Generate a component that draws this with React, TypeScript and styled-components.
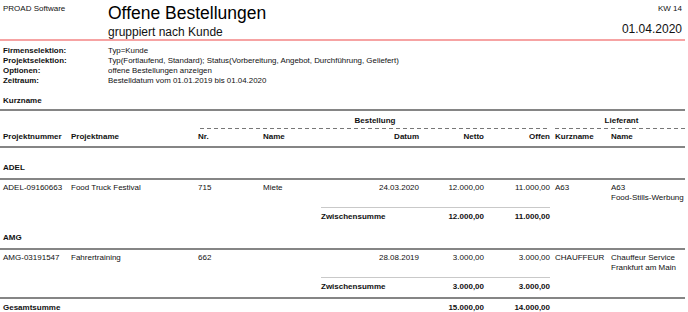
import styled, { createGlobalStyle } from "styled-components";

const GlobalStyle = createGlobalStyle`
  html, body {
    margin: 0;
    padding: 0;
    background: #ffffff;
  }
  body {
    font-family: "Liberation Sans", Arial, sans-serif;
    color: #111111;
  }
`;

const COLS = "68px 127px 65px 58px 39px 59px 65px 66px 61px 1fr";

type Order = {
  projektnummer: string;
  projektname: string;
  nr: string;
  name: string;
  datum: string;
  netto: string;
  offen: string;
  kurzname: string;
  lieferant: string[];
};

type Group = {
  kunde: string;
  orders: Order[];
  netto: string;
  offen: string;
};

const groups: Group[] = [
  {
    kunde: "ADEL",
    orders: [
      {
        projektnummer: "ADEL-09160663",
        projektname: "Food Truck Festival",
        nr: "715",
        name: "Miete",
        datum: "24.03.2020",
        netto: "12.000,00",
        offen: "11.000,00",
        kurzname: "A63",
        lieferant: ["A63", "Food-Stills-Werbung"],
      },
    ],
    netto: "12.000,00",
    offen: "11.000,00",
  },
  {
    kunde: "AMG",
    orders: [
      {
        projektnummer: "AMG-03191547",
        projektname: "Fahrertraining",
        nr: "662",
        name: "",
        datum: "28.08.2019",
        netto: "3.000,00",
        offen: "3.000,00",
        kurzname: "CHAUFFEUR",
        lieferant: ["Chauffeur Service", "Frankfurt am Main"],
      },
    ],
    netto: "3.000,00",
    offen: "3.000,00",
  },
];

const meta = [
  ["Firmenselektion:", "Typ=Kunde"],
  ["Projektselektion:", "Typ(Fortlaufend, Standard); Status(Vorbereitung, Angebot, Durchführung, Geliefert)"],
  ["Optionen:", "offene Bestellungen anzeigen"],
  ["Zeitraum:", "Bestelldatum vom 01.01.2019 bis 01.04.2020"],
];

export default function App() {
  return (
    <Page>
      <GlobalStyle />
      <Header>
        <Brand>PROAD Software</Brand>
        <TitleBox>
          <Title>Offene Bestellungen</Title>
          <Subtitle>gruppiert nach Kunde</Subtitle>
        </TitleBox>
        <DateBox>
          <Week>KW 14</Week>
          <DateText>01.04.2020</DateText>
        </DateBox>
      </Header>

      <Meta>
        {meta.map(([label, value]) => (
          <MetaRow key={label}>
            <b>{label}</b>
            <span>{value}</span>
          </MetaRow>
        ))}
      </Meta>

      <GroupKey>Kurzname</GroupKey>

      <ColumnGroups>
        <GroupTitle $from={3} $to={9}>Bestellung</GroupTitle>
        <GroupTitle $from={9} $to={11} $inset={5}>Lieferant</GroupTitle>
      </ColumnGroups>

      <HeadRow>
        <Cell>Projektnummer</Cell>
        <Cell>Projektname</Cell>
        <Cell>Nr.</Cell>
        <Cell $span={2}>Name</Cell>
        <Cell $right>Datum</Cell>
        <Cell $right>Netto</Cell>
        <Cell $right>Offen</Cell>
        <Cell $pad>Kurzname</Cell>
        <Cell>Name</Cell>
      </HeadRow>

      <Groups>
        {groups.map((g) => (
          <section key={g.kunde}>
            <Customer>{g.kunde}</Customer>
            {g.orders.map((o) => (
              <DataRow key={o.projektnummer}>
                <Cell>{o.projektnummer}</Cell>
                <Cell>{o.projektname}</Cell>
                <Cell>{o.nr}</Cell>
                <Cell $span={2}>{o.name}</Cell>
                <Cell $right>{o.datum}</Cell>
                <Cell $right>{o.netto}</Cell>
                <Cell $right>{o.offen}</Cell>
                <Cell $pad>{o.kurzname}</Cell>
                <Cell>
                  {o.lieferant.map((l) => (
                    <div key={l}>{l}</div>
                  ))}
                </Cell>
              </DataRow>
            ))}
            <SubtotalRow>
              <SubRule />
              <Label>Zwischensumme</Label>
              <Amount>{g.netto}</Amount>
              <Amount>{g.offen}</Amount>
            </SubtotalRow>
          </section>
        ))}
      </Groups>

      <TotalRow>
        <TotalLabel>Gesamtsumme</TotalLabel>
        <Amount>15.000,00</Amount>
        <Amount>14.000,00</Amount>
      </TotalRow>
    </Page>
  );
}

const Page = styled.div`
  width: 688px;
  height: 312px;
  overflow: hidden;
  font-size: 8px;
  line-height: 10px;
`;

const Header = styled.header`
  display: grid;
  grid-template-columns: 105px 1fr auto;
  height: 39px;
  padding: 0 6px 0 3px;
  margin-right: 3px;
  border-bottom: 2px solid #f6a3a3;
`;

const Brand = styled.div`
  padding-top: 4px;
`;

const TitleBox = styled.div`
  display: flex;
  flex-direction: column;
`;

const Title = styled.h1`
  margin: 3px 0 0;
  font-size: 17.5px;
  line-height: 20px;
  font-weight: 400;
  color: #000;
`;

const Subtitle = styled.div`
  margin-top: 2px;
  font-size: 12px;
  line-height: 14px;
`;

const DateBox = styled.div`
  display: flex;
  flex-direction: column;
  align-items: flex-end;
  margin-right: -3px;
`;

const Week = styled.div`
  padding-top: 4px;
`;

const DateText = styled.div`
  margin-top: 8px;
  font-size: 12px;
  line-height: 14px;
`;

const Meta = styled.div`
  padding: 5px 3px 0;
  font-size: 7.9px;
`;

const MetaRow = styled.div`
  display: grid;
  grid-template-columns: 105px 1fr;

  b {
    font-weight: 700;
  }
`;

const GroupKey = styled.div`
  margin: 10px 3px 0 0;
  padding: 0 3px 3px;
  font-weight: 700;
  border-bottom: 2px solid #858585;
`;

const ColumnGroups = styled.div`
  display: grid;
  grid-template-columns: ${COLS};
  margin-top: 5px;
  padding-left: 3px;
`;

const GroupTitle = styled.div<{ $from: number; $to: number; $inset?: number }>`
  grid-column: ${(p) => p.$from} / ${(p) => p.$to};
  margin-left: ${(p) => p.$inset ?? 2}px;
  padding-bottom: 3px;
  text-align: center;
  font-weight: 700;
  background: repeating-linear-gradient(to right, #777 0 4px, transparent 4px 7px)
    bottom / 100% 1px no-repeat;
`;

const Row = styled.div`
  display: grid;
  grid-template-columns: ${COLS};
  padding-left: 3px;
`;

const HeadRow = styled(Row)`
  margin: 3px 3px 0 0;
  padding-bottom: 4px;
  font-weight: 700;
  border-bottom: 2px solid #858585;
`;

const Groups = styled.div`
  display: flow-root;
  padding-top: 4px;
`;

const Cell = styled.div<{ $right?: boolean; $pad?: boolean; $span?: number }>`
  grid-column: span ${(p) => p.$span ?? 1};
  text-align: ${(p) => (p.$right ? "right" : "left")};
  padding-left: ${(p) => (p.$pad ? 5 : 0)}px;
  white-space: nowrap;
`;

const Customer = styled.div`
  margin: 11px 3px 0 0;
  padding: 0 3px 5px;
  font-weight: 700;
  border-bottom: 2px solid #858585;
`;

const DataRow = styled(Row)`
  margin-top: 3px;
`;

const SubtotalRow = styled(Row)`
  margin-top: 4px;
  row-gap: 4px;
  font-weight: 700;
`;

const SubRule = styled.div`
  grid-column: 5 / 9;
  height: 1px;
  background: #c9c9c9;
`;

const Label = styled.div`
  grid-column: 5 / 7;
`;

const Amount = styled.div`
  text-align: right;
  font-weight: 700;
`;

const TotalRow = styled(Row)`
  margin: 5px 3px 0 0;
  padding-top: 4px;
  border-top: 2px solid #858585;
  font-weight: 700;
`;

const TotalLabel = styled.div`
  grid-column: 1 / 7;
`;
